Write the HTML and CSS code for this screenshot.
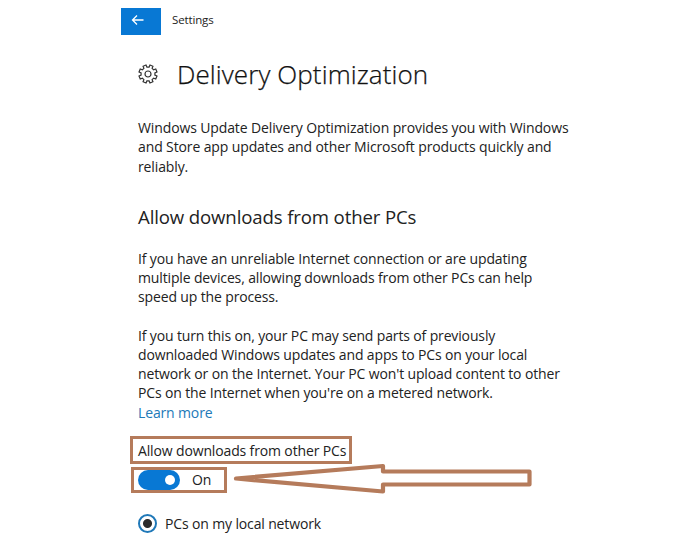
FILE: index.html
```html
<!DOCTYPE html>
<html lang="en">
<head>
    <meta charset="UTF-8">
    <meta name="viewport" content="width=device-width, initial-scale=1.0">
    <title>Settings - Delivery Optimization</title>
    <link rel="stylesheet" href="styles.css">
</head>
<body>
    <div class="window">
        <header class="title-bar">
            <button class="back-button" aria-label="Back">
                <svg width="14" height="12" viewBox="0 0 14 12">
                    <path d="M12.5 6H1.5M6 1.5L1.5 6L6 10.5" />
                </svg>
            </button>
            <span class="app-name">Settings</span>
        </header>

        <main class="content">
            <div class="page-heading">
                <svg class="gear" width="20" height="20" viewBox="-10 -10 20 20">
                    <path d="M6.91 1.1L8.98 1.99L7.76 4.94L5.66 4.11L4.11 5.66L4.94 7.76L1.99 8.98L1.1 6.91L-1.1 6.91L-1.99 8.98L-4.94 7.76L-4.11 5.66L-5.66 4.11L-7.76 4.94L-8.98 1.99L-6.91 1.1L-6.91 -1.1L-8.98 -1.99L-7.76 -4.94L-5.66 -4.11L-4.11 -5.66L-4.94 -7.76L-1.99 -8.98L-1.1 -6.91L1.1 -6.91L1.99 -8.98L4.94 -7.76L4.11 -5.66L5.66 -4.11L7.76 -4.94L8.98 -1.99L6.91 -1.1Z" />
                    <circle r="3" />
                </svg>
                <h1>Delivery Optimization</h1>
            </div>

            <p class="intro">
                Windows Update Delivery Optimization provides you with Windows<br>
                and Store app updates and other Microsoft products quickly and<br>
                reliably.
            </p>

            <h2>Allow downloads from other PCs</h2>

            <p class="reason">
                If you have an unreliable Internet connection or are updating<br>
                multiple devices, allowing downloads from other PCs can help<br>
                speed up the process.
            </p>

            <p class="details">
                If you turn this on, your PC may send parts of previously<br>
                downloaded Windows updates and apps to PCs on your local<br>
                network or on the Internet. Your PC won't upload content to other<br>
                PCs on the Internet when you're on a metered network.<br>
                <a class="learn-more" href="#">Learn more</a>
            </p>

            <div class="marked setting-label">Allow downloads from other PCs</div>

            <div class="marked setting-toggle">
                <span class="toggle"><span class="knob"></span></span>
                <span class="toggle-state">On</span>
                <svg class="arrow" width="302" height="34" viewBox="0 0 302 34">
                    <path d="M4 16.5L151 4V9.5H297.5V22.5H151V29.5Z" />
                </svg>
            </div>

            <label class="option">
                <span class="radio"></span>
                <span>PCs on my local network</span>
            </label>
        </main>
    </div>
</body>
</html>
```

FILE: styles.css
```css
* {
    margin: 0;
    padding: 0;
    box-sizing: border-box;
}

body {
    font-family: 'Segoe UI', 'Open Sans', 'Noto Sans', sans-serif;
    background: #ffffff;
    color: #222222;
    font-size: 14px;
    letter-spacing: -0.14px;
    line-height: 19.25px;
    overflow: hidden;
}

.window {
    width: 460px;
    height: 544px;
    margin-left: 121px;
    padding-top: 8px;
    white-space: nowrap;
}

.title-bar {
    display: flex;
    align-items: center;
    height: 27px;
}

.back-button {
    width: 40px;
    height: 27px;
    padding: 0 7px 3px 0;
    border: none;
    background: #0878d4;
    display: flex;
    align-items: center;
    justify-content: center;
}

.back-button svg {
    fill: none;
    stroke: #ffffff;
    stroke-width: 1.3;
}

.app-name {
    margin-left: 11px;
    padding-bottom: 3px;
    font-size: 11.5px;
    line-height: 16px;
}

.content {
    padding-left: 17px;
}

.page-heading {
    display: flex;
    align-items: center;
    height: 36px;
    margin-top: 21px;
}

.gear {
    fill: none;
    stroke: #333333;
    stroke-width: 1.2;
}

h1 {
    margin-left: 19px;
    color: #111111;
    font-size: 26px;
    font-weight: 300;
    letter-spacing: 0.1px;
    line-height: 36px;
    -webkit-text-stroke: 0.25px #111111;
}

h2 {
    margin-top: 27px;
    font-size: 18.6px;
    font-weight: 400;
    letter-spacing: -0.13px;
    line-height: 28px;
}

.intro {
    margin-top: 26px;
    letter-spacing: -0.12px;
}

.reason {
    margin-top: 18px;
}

.details {
    margin-top: 19px;
}

.learn-more {
    color: #2279b8;
    text-decoration: none;
}

.marked {
    border: 3px solid #b57b5b;
    display: flex;
    align-items: center;
}

.setting-label {
    width: 222px;
    height: 28px;
    margin: 14px 0 0 -8px;
    padding: 1px 0 0 5px;
}

.setting-toggle {
    position: relative;
    width: 96px;
    height: 26px;
    margin: 3px 0 0 -7px;
    padding-left: 4px;
}

.toggle {
    width: 42px;
    height: 20px;
    padding-right: 5px;
    border-radius: 10px;
    background: #0878d4;
    display: flex;
    align-items: center;
    justify-content: flex-end;
}

.knob {
    width: 10px;
    height: 10px;
    border-radius: 50%;
    background: #ffffff;
}

.toggle-state {
    margin-left: 12px;
}

/* Arrow pointing at the toggle */
.arrow {
    position: absolute;
    left: 98px;
    top: -8px;
    fill: none;
    stroke: #b57b5b;
    stroke-width: 4.2;
    stroke-linejoin: round;
}

.option {
    display: flex;
    align-items: center;
    gap: 8px;
    margin-top: 21px;
}

.radio {
    width: 19px;
    height: 19px;
    border: 2px solid #1f78b8;
    border-radius: 50%;
    background: radial-gradient(circle, #2b2b2b 4px, #ffffff 5px);
}
```
